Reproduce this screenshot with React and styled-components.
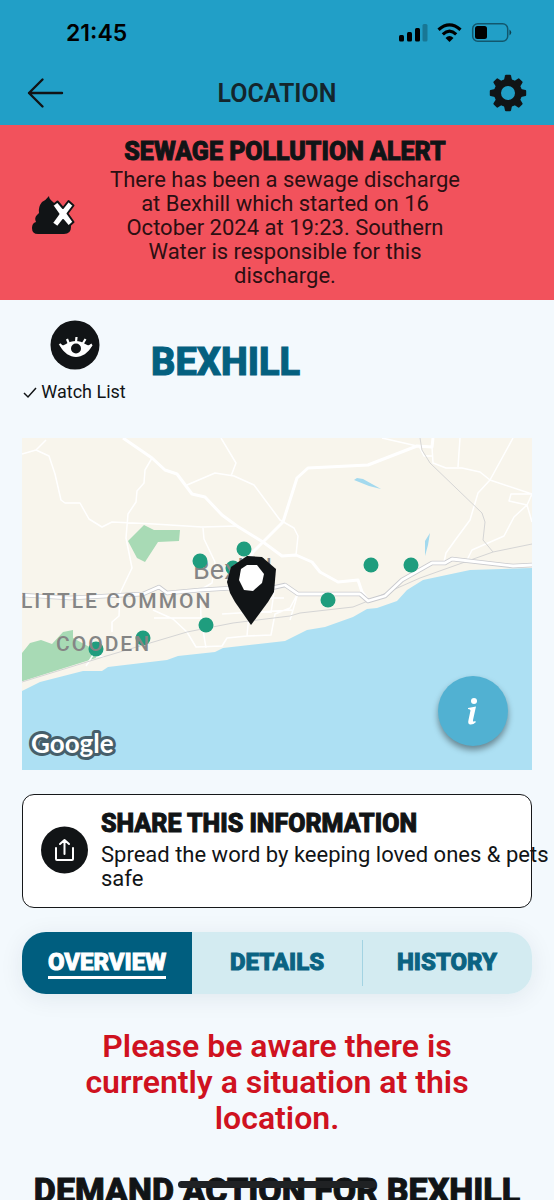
import React, { useState } from 'react'
import styled, { createGlobalStyle } from 'styled-components'

const GlobalStyle=createGlobalStyle`
*{
    box-sizing:border-box;
}
body{
    margin:0;
    background-color:#f3f9fd;
    font-family:Roboto, "Liberation Sans", sans-serif;
    color:#111416;
}
h1,h2,h3,p{
    margin:0;
}
button{
    border:none;
    padding:0;
    background:transparent;
    color:inherit;
    font:inherit;
    cursor:pointer;
}
`
const displayFont=`
font-family:Roboto, "Liberation Sans", sans-serif;
font-weight:800;
-webkit-text-stroke:1px currentColor;
`
const Screen=styled.div`
height:100vh;
display:flex;
flex-direction:column;
overflow:hidden;
`
const Header=styled.header`
flex:none;
background-color:#219fc7;
`
const StatusBar=styled.div`
height:64px;
padding:2px 42px 0 66px;
display:flex;
align-items:center;
justify-content:space-between;
color:black;
font-family:Inter, sans-serif;
font-size:23px;
font-weight:600;
& svg{
    display:block;
}
`
const NavBar=styled.nav`
height:61px;
padding:0 27px 3px;
display:grid;
grid-template-columns:38px 1fr 38px;
align-items:center;
text-align:center;
& h1{
    font-size:25px;
    font-weight:600;
    color:#14252c;
}
& svg{
    display:block;
}
`
const Content=styled.main`
flex:1;
overflow-y:auto;
scrollbar-width:none;
`
const Alert=styled.section`
background-color:#f2525c;
padding:12px 91px 12px 30px;
display:grid;
grid-template-columns:46px 1fr;
column-gap:31px;
align-items:center;
text-align:center;
& h2{
    ${displayFont}
    font-size:25px;
    line-height:29px;
    margin-bottom:2px;
    white-space:nowrap;
}
& p{
    font-size:22px;
    line-height:24px;
    color:#2c0f12;
}
`
const Body=styled.div`
padding:20px 22px 0;
`
const Place=styled.div`
display:flex;
gap:24px;
& h2{
    ${displayFont}
    font-size:38px;
    line-height:48px;
    color:#04607f;
    padding-top:18px;
}
`
const WatchButton=styled.button`
width:105px;
display:flex;
flex-direction:column;
align-items:center;
gap:10px;
& span{
    display:flex;
    align-items:center;
    gap:4px;
    font-size:18px;
    line-height:24px;
    white-space:nowrap;
}
`
const MapBox=styled.div`
position:relative;
margin-top:34px;
&>svg{
    display:block;
    width:100%;
    height:auto;
}
`
const MapLabel=styled.text`
font-family:Roboto, sans-serif;
font-size:${p=>p.$town?"27px":"21px"};
font-weight:${p=>p.$town?400:500};
letter-spacing:${p=>p.$town?"0":"2px"};
fill:#858585;
`
const GoogleMark=styled.text`
font-family:Lato, sans-serif;
font-weight:700;
font-size:26px;
fill:white;
stroke:#465f6b;
stroke-width:6px;
stroke-linejoin:round;
paint-order:stroke;
`
const InfoButton=styled.button`
position:absolute;
right:24px;
bottom:24px;
width:70px;
height:70px;
border-radius:50%;
background-color:#51b1d2;
box-shadow:0 4px 6px rgba(0,0,0,0.4);
color:white;
& svg{
    display:block;
    margin:0 auto;
}
`
const ShareCard=styled.button`
width:100%;
margin-top:24px;
padding:14px 18px 16px;
border:1px solid #16181a;
border-radius:12px;
background-color:white;
display:flex;
align-items:center;
gap:13px;
text-align:left;
&>svg{
    flex:none;
}
& strong{
    ${displayFont}
    display:block;
    font-size:25px;
    line-height:29px;
    margin-bottom:5px;
}
& span{
    display:block;
    font-size:22px;
    line-height:24px;
}
& .text{
    flex:1;
    min-width:0;
    margin-right:-40px;
}
`
const TabShadow=styled.div`
margin-top:24px;
border-radius:24px;
box-shadow:0 4px 24px rgba(0,40,60,0.08);
`
const Tabs=styled.div`
height:62px;
display:grid;
grid-template-columns:repeat(3, 1fr);
border-radius:24px;
overflow:hidden;
background-color:#d3ebf1;
`
const Tab=styled.button`
${displayFont}
position:relative;
font-size:24px;
line-height:28px;
color:${p=>p.$active?"white":"#0b6382"};
background-color:${p=>p.$active?"#005e7f":"transparent"};
& span{
    display:inline-block;
    border-bottom:3px solid ${p=>p.$active?"white":"transparent"};
}
&:last-child::before{
    content:"";
    position:absolute;
    left:0;
    top:8px;
    bottom:8px;
    width:1px;
    background-color:#a3d3e2;
}
`
const Warning=styled.p`
max-width:400px;
margin:34px auto 0;
text-align:center;
font-size:32px;
line-height:36px;
font-weight:600;
color:#cf1220;
`
const Demand=styled.h2`
${displayFont}
margin-top:30px;
text-align:center;
white-space:nowrap;
font-size:34px;
line-height:48px;
`
const HomeBar=styled.div`
position:fixed;
left:50%;
bottom:12px;
width:198px;
height:7px;
margin-left:-99px;
border-radius:4px;
background-color:#202224;
`

const dots=[[349,127],[389,127],[306,162],[178,123],[222,111],[211,130],[74,211],[121,200],[184,187]]
const mainRoads=[
    "M101 0L130 20L143 32L155 36L170 56L183 59L200 77L215 88L241 104L260 118L274 117L290 124L298 134L316 144L336 142L340 154L346 162",
    "M411 0L410 9L395 8L346 27L286 30L275 40L261 84L231 114L214 150",
]
const smallRoads=[
    "M0 16L14 12L27 18L33 36L39 62L43 65L58 65L67 81L80 89L90 84L132 86L180 89L215 88",
    "M14 12L24 2",
    "M130 20L123 32L122 45L115 53L114 64L106 76L104 100L110 130L98 155L97 178L90 184V194",
    "M165 47L193 35L212 38L232 47L258 82L272 90L276 98L274 117",
    "M199 0L214 25L209 38",
    "M181 90L182 101L193 124L190 145L178 152L179 180L184 210",
    "M131 172L151 181L165 194L174 209L200 208L205 200L225 198L227 176",
    "M225 198L249 197L253 176L268 170L276 155",
    "M132 180H180M200 176L270 172M236 160L262 160",
    "M253 147L249 175M276 155L268 182",
    "M360 0L395 8",
    "M397 8L402 18H410M410 9L411 25L424 30H440L458 34L468 42L510 56M438 0L436 29",
    "M491 0L468 42L456 55L448 82L434 101L424 115L422 124",
    "M510 56H489L487 63L505 67L510 56M505 67L492 79L482 98L450 112L445 122M505 67L510 84",
    "M64 228L71 217L82 219",
]
const coastRoad="M-2 157L48 160L121 156L137 149L145 155L178 152L211 150L245 151L263 147L276 156L338 156L346 163L363 158L380 142L410 125L423 125L430 121L491 128L510 127"

function BeachMap(){
    return (
      <svg viewBox="0 0 510 332" role="img" aria-label="Map of Bexhill">
        <rect width="510" height="332" fill="#f8f5ec"/>
        <path fill="#a8dab5" d="M122 87L132 92H158L157 103L136 104L123 124L115 120L106 103ZM0 215L8 205L19 202L30 206L41 194L51 192V200L73 212L74 220L1 243H0Z"/>
        <path fill="#ade0f3" d="M0 253L18 244L61 233H80L86 229L145 222L156 218L193 214L201 210L263 203L285 192L303 189L331 179L345 171L355 170L375 163L385 152L401 142L448 132L510 130V332H0Z"/>
        <path fill="#a3d9ee" d="M332 42L335 40L341 41L359 51L347 48ZM408 95L403 103V118L406 107Z"/>
        <g fill="none" stroke="white" strokeLinejoin="round">
          <path strokeWidth="1.5" d={smallRoads.join("")}/>
          <path strokeWidth="3" d={mainRoads.join("")}/>
        </g>
        <g fill="none" strokeLinejoin="round">
          <path stroke="#d5d5d5" d="M0 244L81 219L128 205L165 194L211 185L268 178L278 175L331 169L346 163L398 140L471 114L510 106M398 0L400 12L408 25L460 75L463 84L461 102L471 114"/>
          <path stroke="#c9cace" strokeWidth="4.500" d={coastRoad}/>
          <path stroke="white" strokeWidth="2.800" d={coastRoad}/>
        </g>
        {dots.slice(4).map(([x,y])=><circle key={x} cx={x} cy={y} r="7.5" fill="#1f9d7e"/>)}
        <MapLabel $town x="171" y="141">Bexhill</MapLabel>
        <MapLabel x="-1" y="170">LITTLE COMMON</MapLabel>
        <MapLabel x="34" y="213">COODEN</MapLabel>
        {dots.slice(0,4).map(([x,y])=><circle key={x} cx={x} cy={y} r="7.5" fill="#1f9d7e"/>)}
        <path fill="#111416" d="M225 118L240 119L254 131L252 154L246 164L229 187L213 164L208 155L205 144L209 129Z"/>
        <path fill="white" d="M225 127H235L242 136L240 145L231 153L222 152L217 142L219 131Z"/>
        <GoogleMark x="9" y="315">Google</GoogleMark>
      </svg>
    )
}

const SignalIcons=()=>(
    <svg width="114" height="24" viewBox="0 0 114 24" aria-hidden="true">
      <rect x="1" y="14" width="5" height="6.500" rx="1.500"/>
      <rect x="9" y="11" width="5" height="9.500" rx="1.500"/>
      <rect x="17" y="7" width="5" height="13.500" rx="1.500"/>
      <rect x="24.500" y="3" width="5" height="17.500" rx="1.500" opacity=".25"/>
      <g fill="none" stroke="black" strokeWidth="3.200">
        <path d="M40.500 8.800Q51.500 -1 62.500 8.800M44.800 13.300Q51.500 7 58.200 13.300"/>
      </g>
      <path d="M47.500 17Q51.500 13 55.500 17L51.500 21Z"/>
      <rect x="74.700" y="2.700" width="35" height="17.500" rx="5" fill="none" stroke="black" strokeWidth="1.500" opacity=".45"/>
      <rect x="77" y="5" width="12" height="13" rx="2.500"/>
      <path d="M111.500 8.500Q115 11.500 111.500 14.500Z" opacity=".6"/>
    </svg>
)

const BackIcon=()=>(
    <svg width="38" height="38" viewBox="0 0 38 38" fill="none" stroke="#111416" strokeWidth="2.400" strokeLinecap="round" strokeLinejoin="round">
      <path d="M35 19H2M15.500 5.500L2 19L15.500 32.500"/>
    </svg>
)

const GearIcon=()=>(
    <svg width="38" height="38" viewBox="-19 -19 38 38">
      <circle r="10.500" fill="none" stroke="#111416" strokeWidth="7"/>
      {[0,45,90,135,180,225,270,315].map(a=><path key={a} transform={`rotate(${a})`} fill="#111416" d="M-4 -13L-3 -17.500Q-2.800 -18.200 -2 -18.200H2Q2.800 -18.200 3 -17.500L4 -13Z"/>)}
    </svg>
)

const PooIcon=()=>(
    <svg width="46" height="42" viewBox="0 0 46 42" aria-hidden="true">
      <path fill="#111416" d="M19 4C19 8 23 9 26 13L37 29Q41 31 41 35Q41 42 34 42H8Q2 42 2 36Q2 31 6 30Q4 26 7 23Q8 22 9 21Q8 15 12 10Q16 8 19 4Z"/>
      <path fill="white" stroke="#111416" strokeWidth="2" strokeLinejoin="round" d="M22.500 13.500L27.500 9.500L33 16L38.500 9L43.500 13.500L37.500 21.500L43.500 30L38.500 34.500L33 28L27.500 35L22 31L28.500 22Z"/>
    </svg>
)

const EyeIcon=()=>(
    <svg width="50" height="50" viewBox="0 0 50 50" aria-hidden="true">
      <circle cx="25" cy="25" r="24.500" fill="#111416"/>
      <g fill="none" stroke="white" strokeWidth="2.200">
        <path d="M9.500 24L13 27M17 19L19 24M26.500 17L26 22M35.500 19L32.500 24M42 24.500L38.500 27"/>
      </g>
      <path fill="white" d="M10 26C15 26 18 21 26 21C33 21 36 26 42 26C38 33 32 37 26 37C20 37 14 33 10 26Z"/>
      <circle cx="26" cy="28.500" r="5" fill="#111416"/>
    </svg>
)

const CheckIcon=()=>(
    <svg width="14" height="14" viewBox="0 0 14 14" fill="none" stroke="#111416" strokeWidth="1.500">
      <path d="M1 8L5 12L13 3"/>
    </svg>
)

const ShareIcon=()=>(
    <svg width="47" height="48" viewBox="0 0 47 48" aria-hidden="true">
      <circle cx="23.500" cy="24" r="23.500" fill="#111416"/>
      <g fill="none" stroke="white" strokeWidth="2" strokeLinecap="round" strokeLinejoin="round">
        <path d="M15 22V33Q15 34 16 34H31Q32 34 32 33V22M23.500 28V14M19 18L23.500 14L28 18"/>
      </g>
    </svg>
)

const InfoIcon=()=>(
    <svg width="14" height="30" viewBox="0 0 14 30" fill="white">
      <circle cx="8" cy="5" r="3"/>
      <path d="M2 12L10 10.500L7 24Q6.500 26.500 9 25L10 26Q7 29 4 28.500Q1.500 28 2.500 24L4.500 14.500Q4.500 13 2 13Z"/>
    </svg>
)

const tabNames=["OVERVIEW","DETAILS","HISTORY"]

export default function App() {
    const [tab,setTab]=useState(0)
  return (
    <Screen>
      <GlobalStyle/>
      <Header>
          <StatusBar><span>21:45</span><SignalIcons/></StatusBar>
          <NavBar>
              <button aria-label="Back"><BackIcon/></button>
              <h1>LOCATION</h1>
              <button aria-label="Settings"><GearIcon/></button>
          </NavBar>
      </Header>
      <Content>
          <Alert>
              <PooIcon/>
              <div>
                  <h2>SEWAGE POLLUTION ALERT</h2>
                  <p>There has been a sewage discharge at Bexhill which started on 16 October 2024 at 19:23. Southern Water is responsible for this discharge.</p>
              </div>
          </Alert>
          <Body>
              <Place>
                  <WatchButton aria-pressed="true">
                      <EyeIcon/>
                      <span><CheckIcon/>Watch List</span>
                  </WatchButton>
                  <h2>BEXHILL</h2>
              </Place>
              <MapBox>
                  <BeachMap/>
                  <InfoButton aria-label="Map information"><InfoIcon/></InfoButton>
              </MapBox>
              <ShareCard>
                  <ShareIcon/>
                  <div className="text">
                      <strong>SHARE THIS INFORMATION</strong>
                      <span>Spread the word by keeping loved ones &amp; pets safe</span>
                  </div>
              </ShareCard>
              <TabShadow>
                  <Tabs role="tablist">
                      {tabNames.map((name,i)=>(
                          <Tab key={name} role="tab" aria-selected={tab===i} $active={tab===i} onClick={()=>setTab(i)}><span>{name}</span></Tab>
                      ))}
                  </Tabs>
              </TabShadow>
              <Warning>Please be aware there is currently a situation at this location.</Warning>
              <Demand>DEMAND ACTION FOR BEXHILL</Demand>
          </Body>
      </Content>
      <HomeBar/>
    </Screen>
  )
}
